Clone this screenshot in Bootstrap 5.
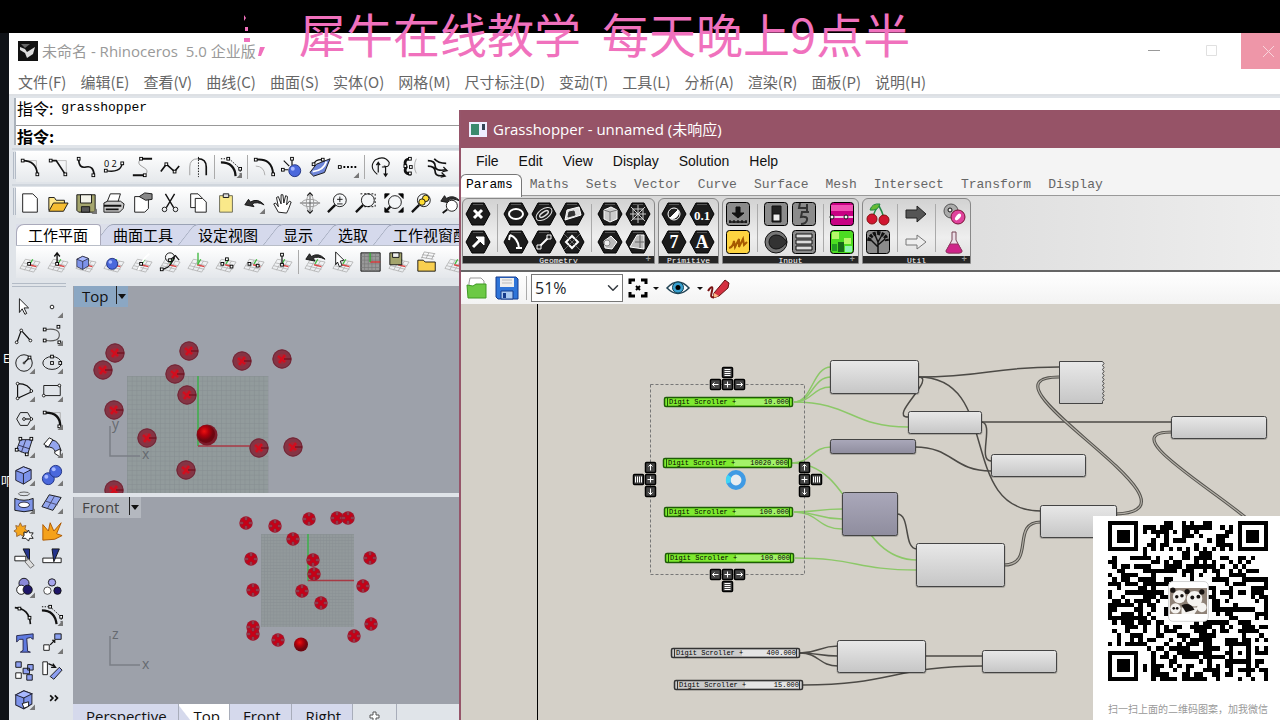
<!DOCTYPE html>
<html lang="zh-CN">
<head>
<meta charset="utf-8">
<meta name="viewport" content="width=device-width, initial-scale=1">
<title>Rhinoceros - Grasshopper</title>
<link href="https://cdn.jsdelivr.net/npm/bootstrap@5.3.0/dist/css/bootstrap.min.css" rel="stylesheet">
<style>
:root{--ui:"Open Sans","Noto Sans CJK SC",sans-serif;--mono:"Liberation Mono","Noto Sans CJK SC",monospace}
body{background:#000;font-family:var(--ui);font-size:15px;line-height:20px;color:#000;height:100vh}
button{border:0;background:none;padding:0;color:inherit}
svg{display:block}
.desk-strip{width:9px;background:#0f1217;margin-top:33px;color:#fff;font-size:12px}
.rhino{margin-top:33px;background:#e0e4e9;min-width:0}
.rh-title{height:36px;background:#fff;color:#999;padding-left:9px;margin-right:-19px}
.rh-title button{width:58px;height:36px}
.rh-title .close-btn{background:#ee96a8;color:#fff}
.rh-menu{height:27px;background:#fff;padding-left:9px;gap:14px;border-bottom:2px solid #dde0e4}
.rh-menu a{color:#666;text-decoration:none;font-family:"Noto Sans CJK SC",sans-serif;white-space:nowrap}
.cmd{margin:2px 0 3px 5px;border-left:2px double #aab2bb;background:#fff;font-family:var(--mono);font-size:13px}
.cmd>*{height:24px;padding-left:1px}
.cmd .cjk{font-size:16px;font-family:"Noto Sans CJK SC",sans-serif}
.cmd>:first-child{border-bottom:1px solid #999;height:28px;align-items:start!important}
.cmd>:last-child{height:19px}
.cmd input{border:0;outline:0;flex:1;min-width:0;height:16px}
.tbar{height:36px;margin-left:3px;padding:1px 0 4px 1px;border-top:2px solid #d0d6dd;}
.tbar>div{background:linear-gradient(#fff,#e6e9ec);border-left:0;height:31px;flex:1}
.tbar::before{content:"";width:3px;border:1px solid #b3bbc6;border-width:0 1px;margin:1px 0}
.tool{width:28px;height:24px;display:grid;place-items:center}
.tool svg{width:24px;height:24px;overflow:visible}
.tbar .tool svg,.planes .tool svg,.pal-grid .tool svg{width:22px;height:22px}
.sep{width:1px;height:24px;background:#aaa;margin:0 2px}
.rtabs{height:22px;margin-left:7px;background:#dcdfea;border-bottom:1px solid #b9bec8;overflow:hidden}
.rtabs button{padding:0 13px 0 12px;position:relative;font-family:"Noto Sans CJK SC",sans-serif;line-height:18px;white-space:nowrap;z-index:0}
.rtabs button::before{content:"";position:absolute;inset:0 -5px 0 0;background:#d5d9ec;border:1px solid #9aa2b4;border-width:1px 1px 0;transform:skewX(-38deg);border-radius:5px 5px 0 0;z-index:-1}
.rtabs button.active{z-index:2}
.rtabs button.active::before{background:#fff;transform:none;inset:0;border-color:#aab;border-radius:8px 4px 0 0}
.planes{height:32px;margin-left:7px;background:linear-gradient(#fff,#e4e7eb)}
.palette{width:64px;padding:5px 0 0 3px}
.palette .pal-grip{height:4px;width:54px;border:1px solid #b3bbc6;border-width:1px 0;margin-bottom:6px}
.palette .tool{height:28px;place-items:center}
.pal-grid{display:grid;grid-template-columns:28px 28px;margin-left:-2px}
.vp{background:#9da1aa;position:relative;overflow:hidden;flex:1 1 0;min-height:0}
.vp>svg{width:100%;height:100%;position:absolute;inset:0}
.vlabel{position:relative;background:#b4b8bf;color:#444;font-size:15px;height:21px;width:67px;line-height:20px;padding-left:8px;margin-left:1px}
.vlabel.on{background:#8ba7c3;color:#111;width:54px}
.vlabel i{border-left:1px solid #222;height:18px;padding:8px 0 0 1px;margin-left:auto;width:12px}
.caret{display:block;border:4px solid transparent;border-top:5px solid #111;border-bottom:0;width:0;height:0}
.gh-bar .caret{border-width:3px 3px 0;border-top-width:3px}
.vtabs{height:16px;background:#e0e4e9;overflow:hidden}
.vtabs button{height:22px;line-height:24px;padding:0 11px 0 13px;background:#d5d9ec;border-right:1px solid #a8adba;font-size:15px;color:#111}
.vtabs .active{background:linear-gradient(52deg,#d5d9ec 12px,#fff 13px);padding:0 9px 0 15px}
.gh{position:absolute;left:459px;right:0;top:110px;bottom:0;border-left:2px solid #96556a;background:#f4f4f4;overflow:hidden}
.gh-title{height:38px;background:#965367;color:#fff;padding-left:8px;gap:6px}
.gh-menu{height:26px;padding-left:15px;gap:20px;font-family:"Liberation Sans",sans-serif;font-size:14px}
.gh-menu a{color:#111;text-decoration:none}
.gh-tabs{height:22px;font-family:var(--mono);font-size:13px;padding-left:5px;gap:17px;color:#666;border-bottom:1px solid #999}
.gh-tabs button{position:relative;line-height:20px}
.gh-tabs button.active{color:#000;line-height:18px;z-index:0}
.gh-tabs button.active::before{content:"";position:absolute;inset:0 -9px -2px -6px;border:1px solid #777;border-bottom:0;border-radius:6px 6px 0 0;background:#fff;z-index:-1}
.ribbon{height:76px;padding:2px 1px 6px;gap:3px;background:linear-gradient(90deg,#d9d9d9 400px,#eee);border-bottom:2px solid #666}
.panel{border:1px solid #888;border-radius:6px 6px 0 0;background:linear-gradient(#d2d2d2,#eee 60%,#ddd);overflow:hidden}
.panel .icons{padding:1px 2px 0 1px;height:57px}
.panel .two{display:grid;grid-template-rows:28px 28px;grid-auto-flow:column}
.panel .two .tool{height:28px}
.panel .div{width:1px;margin:4px 4px 4px 5px;background:#aaa}
.panel footer{background:#262626;color:#fff;height:9px;font:8px/9px var(--mono);text-align:center;position:relative}
.panel footer b{position:absolute;right:3px;font-size:9px;color:#999}
.gh-bar{height:32px;background:linear-gradient(#fff,#f3f3f3);padding-left:1px}
.gh-bar .tool{width:30px}
.gh-bar select{width:92px;height:28px;border:1px solid #777;border-radius:0;font-size:16px;padding:0 24px 0 3px;background-color:#fff;background-position:right 3px center;background-size:12px;font-family:var(--ui);line-height:24px}
.canvas{background:#d4d0c8;flex:1;min-height:0;overflow:hidden}
.canvas svg{width:100%;height:100%}
.canvas text{font-family:"Liberation Mono",monospace;font-size:7px}
.marquee-text{position:absolute;left:244px;top:0;width:668px;height:66px;overflow:hidden;color:#f071bd;font:400 47px/66px "Noto Sans CJK SC",sans-serif;white-space:pre;gap:33px;pointer-events:none}
.qr{position:absolute;right:0;bottom:0;width:187px;height:204px;background:#fff;padding:5px 12px 0 15px;color:#999;font:10px/18px "Noto Sans CJK SC",sans-serif;white-space:nowrap}
.qr div{margin-top:19px}
</style>
</head>
<body class="position-relative overflow-hidden d-flex">
<aside class="desk-strip flex-shrink-0 overflow-hidden"><svg width="9" height="687"><text x="3" y="330" fill="#fff" font-size="12">E</text><text x="1" y="453" fill="#fff" font-size="12">叩</text></svg></aside>

<main class="rhino flex-grow-1 d-flex flex-column overflow-hidden">
  <header class="rh-title d-flex align-items-center flex-shrink-0">
    <svg class="me-1" width="20" height="20"><path fill="#111" d="M0 0h20v20H0z"/><path d="M2 6l5 2 2 3 8-5-2 7-6 4-2-5-5-3z" fill="#ddd"/><path d="M3 3h9l-5 4z" fill="#666"/></svg>
    <span>未命名 - Rhinoceros&nbsp; 5.0 企业版</span>
    <button class="ms-auto" aria-label="最小化"><svg width="58" height="36"><path d="M23 17.500h12" stroke="#999"/></svg></button>
    <button aria-label="最大化"><svg width="58" height="36"><path d="M23.500 12.500h10v10h-10z" fill="none" stroke="#e0e0e0"/></svg></button>
    <button class="close-btn" aria-label="关闭"><svg width="58" height="36"><path d="M22 13l11 11M33 13L22 24" stroke="#f8d5dc"/></svg></button>
  </header>
  <nav class="rh-menu d-flex align-items-center flex-shrink-0">
    <a href="#">文件(F)</a><a href="#">编辑(E)</a><a href="#">查看(V)</a><a href="#">曲线(C)</a><a href="#">曲面(S)</a><a href="#">实体(O)</a><a href="#">网格(M)</a><a href="#">尺寸标注(D)</a><a href="#">变动(T)</a><a href="#">工具(L)</a><a href="#">分析(A)</a><a href="#">渲染(R)</a><a href="#">面板(P)</a><a href="#">说明(H)</a>
  </nav>
  <section class="cmd flex-shrink-0">
    <div class="d-flex"><span class="cjk">指令:</span><span>&nbsp;grasshopper</span></div>
    <div class="d-flex align-items-center"><label for="cmdline" class="cjk fw-bold">指令:</label><input id="cmdline"></div>
  </section>
  <div class="tbar d-flex flex-shrink-0"><div class="d-flex align-items-center" data-icons="curves"></div></div>
  <div class="tbar d-flex flex-shrink-0"><div class="d-flex align-items-center" data-icons="files"></div></div>
  <div class="flex-shrink-0 pt-1 pb-0"></div>
  <nav class="rtabs d-flex flex-shrink-0"><button class="active">工作平面</button><button>曲面工具</button><button>设定视图</button><button>显示</button><button>选取</button><button>工作视窗配置</button></nav>
  <div class="planes d-flex align-items-center flex-shrink-0" data-icons="planes"></div>
  <div class="d-flex flex-grow-1 overflow-hidden">
    <aside class="palette flex-shrink-0"><div class="pal-grip"></div><div class="pal-grid" data-icons="palette"></div></aside>
    <section class="d-flex flex-column flex-grow-1 pt-2 overflow-hidden">
      <div class="vp mb-1">
        <svg><defs>
          <pattern id="g1" x="127" y="377" width="4.7" height="4.7" patternUnits="userSpaceOnUse"><path d="M0 4.7V0h4.7" fill="none" stroke="#7f868b"/></pattern>
          <pattern id="g2" x="261" y="535" width="3.1" height="3.1" patternUnits="userSpaceOnUse"><path d="M0 3.1V0h3.1" fill="none" stroke="#858b90"/></pattern>
          <g id="ball"><circle r="9.7" fill="#853444"/><circle r="9" fill="none" stroke="#702838"/><circle r="5" fill="#a02a3a"/><path d="M-4-3l7 6M3-4l-6 8" stroke="#d40c1c" stroke-width="2.200"/><path d="M2 0h7" stroke="#6b0715"/></g>
          <g id="sball"><circle r="6.7" fill="#a3142a"/><path d="M-4-4l8 8M4-4l-8 8" stroke="#c80016" stroke-width="2.200"/><path d="M-6 0h3M3 0h3M0-6v3M0 3v3" stroke="#8c4a58" stroke-width="1.500"/></g>
          <radialGradient id="rg" cx=".4" cy=".35"><stop stop-color="#e11"/><stop offset=".5" stop-color="#b0000c"/><stop offset="1" stop-color="#6d0610"/></radialGradient>
        </defs>
        <g transform="translate(-73 -287)"><path d="M127 377h141v141H127z" fill="#929b9c"/><path d="M127 377h141.500v141.500H127z" fill="url(#g1)" opacity=".7"/><path d="M198 377v70" stroke="#3db04a" stroke-width="1.500"/><path d="M198 447h70" stroke="#a83944" stroke-width="1.500"/><path d="M110 427v30h30" fill="none" stroke="#7b7f86" stroke-width="1.500"/><g fill="#666a70" font-size="14"><text x="112" y="430">y</text><text x="142" y="460">x</text></g><g id="topballs"></g></g></svg>
        <div class="vlabel on d-flex"><span>Top</span><i><b class="caret"></b></i></div>
      </div>
      <div class="vp">
        <svg><g transform="translate(-73 -498)"><path d="M261 535h93v93h-93z" fill="#92999b"/><path d="M261 535h93v93h-93z" fill="url(#g2)" opacity=".7"/><path d="M308 535v47" stroke="#3db04a" stroke-width="1.500"/><path d="M308 581.500h46" stroke="#a83944" stroke-width="1.500"/><path d="M110 637v29h30" fill="none" stroke="#7b7f86" stroke-width="1.500"/><g fill="#666a70" font-size="14"><text x="112" y="640">z</text><text x="142" y="670">x</text></g><g id="frontballs"></g></g></svg>
        <div class="vlabel d-flex"><span>Front</span><i><b class="caret"></b></i></div>
      </div>
      <nav class="vtabs d-flex flex-shrink-0"><button>Perspective</button><button class="active">Top</button><button>Front</button><button>Right</button><button class="px-3 bg-transparent" aria-label="新增"><svg width="11" height="18"><path d="M4 6h3v3h3v3H7v3H4v-3H1V9h3z" fill="#fff" stroke="#555"/></svg></button></nav>
    </section>
  </div>
</main>

<section class="gh d-flex flex-column">
  <header class="gh-title d-flex align-items-center flex-shrink-0"><svg width="18" height="15"><path fill="#eef" d="M0 0h18v15H0z"/><path fill="#3b8a6d" d="M2 2h8v11H2z"/><path fill="#345" d="M13 2h3v6h-3z"/></svg><span>Grasshopper - unnamed (未响应)</span></header>
  <nav class="gh-menu d-flex align-items-center flex-shrink-0"><a href="#">File</a><a href="#">Edit</a><a href="#">View</a><a href="#">Display</a><a href="#">Solution</a><a href="#">Help</a></nav>
  <nav class="gh-tabs d-flex flex-shrink-0"><button class="active">Params</button><button>Maths</button><button>Sets</button><button>Vector</button><button>Curve</button><button>Surface</button><button>Mesh</button><button>Intersect</button><button>Transform</button><button>Display</button></nav>
  <div class="ribbon d-flex flex-shrink-0" id="ribbon"></div>
  <div class="gh-bar d-flex align-items-center flex-shrink-0">
    <button class="tool" aria-label="打开"><svg viewBox="0 0 24 24"><path d="M5 2h11l3 3v14H4V7z" fill="#fff" stroke="#999"/><path d="M2 9l6 1 3-2h10v14H3z" fill="#6cc944" stroke="#3e9a22"/></svg></button>
    <button class="tool" aria-label="保存"><svg viewBox="0 0 24 24"><path d="M1 1h20l2 2v20H3l-2-2z" fill="#2e74d8" stroke="#153a8c"/><path d="M5 2h14v9H5z" fill="#eee"/><path d="M7 4h10M7 7h10" stroke="#bbb"/><path d="M6 15h12v8H6z" fill="#aac8f0" stroke="#153a8c"/><path d="M8 17h3v5H8z" fill="#153a8c"/></svg></button>
    <span class="sep mx-1"></span>
    <select class="form-select" aria-label="缩放"><option>51%</option></select>
    <button class="tool" aria-label="缩放至全部"><svg viewBox="0 0 24 24"><path d="M4 8V4h5M15 4h5v4M20 16v4h-5M9 20H4v-4" fill="none" stroke="#000" stroke-width="3"/><path d="M10 10l4 4M14 10l-4 4" stroke="#000" stroke-width="2"/></svg></button><b class="caret"></b>
    <button class="tool ms-1" aria-label="预览"><svg viewBox="0 0 24 24"><path d="M1 12Q12 0 23 12Q12 23 1 12z" fill="#f7fbff" stroke="#245" stroke-width="1.500"/><circle cx="12" cy="11.500" r="5.500" fill="#38a0d0" stroke="#145"/><circle cx="12" cy="11.500" r="2.500"/></svg></button><b class="caret ms-1"></b>
    <button class="tool" aria-label="草图"><svg viewBox="0 0 24 24"><path d="M8 17L19 4l4 3-1 5-9 8-6 2z" fill="#d43040" stroke="#611"/><path d="M8 17l5 3-6 2z" fill="#fb8"/><path d="M2 15c4-6 5-4 4 0s-2 7 2 6" fill="none" stroke="#711" stroke-width="2"/></svg></button>
  </div>
  <div class="canvas"><svg><defs>
    <linearGradient id="lg" x2="0" y2="1"><stop stop-color="#e8e8e8"/><stop offset="1" stop-color="#c6c6c6"/></linearGradient>
    <linearGradient id="pg" x2="0" y2="1"><stop stop-color="#aaa8ba"/><stop offset="1" stop-color="#8f8d9e"/></linearGradient>
    </defs><g transform="translate(-461 -304)" id="board"></g></svg></div>
</section>

<div class="marquee-text d-flex"><svg width="22" height="68" fill="#f071bd"><path d="M0 15l2 3-2 3zM1 27h3v4H1zM0 38h6v4H0zM16 47h5l-4 9h-3z"/></svg><span>犀牛在线教学  每天晚上9点半</span></div>
<figure class="qr m-0"><svg id="qr" width="160" height="160" viewBox="0 0 37 37" shape-rendering="crispEdges"></svg><div>扫一扫上面的二维码图案，加我微信</div></figure>

<script>
// small drawing helpers, all in a 24 x 24 box
const q=(x,y)=>`<rect x="${x-1.5}" y="${y-1.5}" width="3" height="3" fill="#fff" stroke="#000"/>`;
const ln=(d,w=1.3,c='#111')=>`<path d="${d}" fill="none" stroke="${c}" stroke-width="${w}"/>`;
const f=(d,c,s='#111')=>`<path d="${d}" fill="${c}" stroke="${s}"/>`;
const ci=(x,y,r,c='none',s='#111')=>`<circle cx="${x}" cy="${y}" r="${r}" fill="${c}" stroke="${s}"/>`;
const corner='<path d="M24 18v6h-6z" fill="#777"/>';
const ball=(x,y,r)=>ci(x,y,r,'#4a68dc','#1e2f80')+`<circle cx="${x-r/3}" cy="${y-r/3}" r="${r/3}" fill="#a8b8ff"/>`;
const cube=(x,y,s=1)=>`<g transform="translate(${x} ${y}) scale(${s})">`+f('M0 5l8-4 8 3v10l-8 5-8-4z','#7d93ea','#223')+f('M0 5l8 3 8-4-8-3z','#a8b8ff','#223')+ln('M8 8v11',1,'#223')+'</g>';
const plane=ln('M7 9l16 3M5 13l16 3M3 16l16 4M1 19l15 4M7 9l-6 10M12 10l-6 11M18 11l-7 11M23 12l-7 11',.8,'#aaa')+ln('M11 15l8 2',1.5,'#d44')+ln('M12 14l3-5',1.5,'#4b4');
const undo=(y=0)=>`<g transform="translate(0 ${y})">`+f('M2 14l4-6 2 3q8-5 15 3-8-4-13-1l2 3z','#333')+'</g>';
const glass=(t='')=>ln('M9 14l-8 8',2.5)+ci(14,9,7,'#f4f6f8')+t;
const icons={
curves:[
 ln('M4 5h15v13',.8,'#aaa')+ln('M4 5q15 0 16 15',1.8)+q(4,5)+q(20,20), ln('M4 5h17v14',.8,'#aaa')+ln('M4 5h6l10 15',1.8)+q(4,5)+q(20,20),
 ln('M4 3q0 11 8 9t9 9',1.8)+q(4,3)+q(20,21), ln('M3 16q16 3 18-8',1.5)+q(3,16)+q(21,8)+'<text x="1" y="12" font-size="10">0 2</text>',
 ln('M11 3h12M2 21h14',2)+ln('M11 3q-6 5 2 9t2 9',1,'#999')+q(11,3)+q(15,21), ln('M2 17l6-8 9 8 5-6',1.8)+q(8,9)+q(17,17),
 ln('M3 21V12Q3 3 12 3',1,'#999')+ln('M12 3q9 0 9 9v9',1.8)+'<path d="M12.500 1v22" stroke="#000" stroke-dasharray="1.500"/>',0, ln('M1 7q15 0 16 15',2.4)+'<path d="M1 3h9l12 11v8" fill="none" stroke="#000" stroke-dasharray="1.500"/>'+q(9,3)+q(22,14)+corner,0,
 ln('M3 4q18-2 19 16',2.2)+ln('M3 11q9 0 10 10',1,'#aaa')+q(3,4)+q(22,20), ball(15,16,6.5)+ln('M12 10V3M8 15H2M9 11L3 5',1.3)+q(12,3)+q(2,15),
 f('M1 18l7-9 15-6-6 15-12 4z','#6f86d8')+ln('M4 17q12-1 15-11',2,'#fff')+ln('M5 9q2-6 11-5')+q(5,9)+q(15,4), '<path d="M3 12h19" stroke="#000" stroke-width="2" stroke-dasharray="2"/>'+q(3,12)+corner,0,
 ln('M8 20Q-2 12 6 4q10-5 15 3 0 6-6 4',1.2)+ln('M9 18V8M7 10l2-3 2 3M13 12h4v9M15 19l2 3 2-3'), ln('M13 3q-8 1-4 9-4 7 5 8',3)+ln('M20 3q-4 8 0 16',1,'#aaa')+q(13,3)+q(8,11)+q(14,12)+q(13,19), ln('M2 5q8 0 8 6t12 4M2 11q8 0 8 6t10 4M9 3q4 5 13 5',1.8)+ln('M19 12l4 4-5 1M17 18l4 4-5 1')],
files:[
 f('M4 2h11l5 5v15H4z','#fff'), f('M2 20V6h6l2 3h9v4','#ffe78a')+f('M2 21l5-9h16l-5 9z','#f6bd32'), f('M2 3h20v19H4l-2-2z','#a4a56d')+f('M6 3h12v9H6z','#f2f2e8')+f('M7 16h9v6H7z','#555')+corner,
 f('M8 2h11l-3 10H4z','#fff')+f('M1 12l4-2h14l4 3-1 5-4 4H1z','#ccc')+ln('M1 15h19M3 19h14',2), f('M4 5h15v13l-4 4H4z','#fff')+f('M9 5l6-4 8 1v6l-7 1z','#888'),
 ln('M7 2l9 15M17 2L8 17',1.5)+ci(6,19,2.5)+ci(18,19,2.5), f('M4 2h8l4 4v11H4z','#fff')+f('M9 7h8l4 4v11H9z','#fff'), f('M5 4h14v18H5z','#fae98a','#665')+f('M9 2h6v4H9z','#ddd'),
 undo()+corner, f('M8 22L3 13l2-1 3 4-2-10 2-1 3 8V3h2l1 9 2-8 2 1-1 9 3-4 2 1-3 8-2 4z','#fff'), ln('M12 1v22M1 12h22',1,'#555')+ln('M9 4l3-3 3 3M9 20l3 3 3-3')+'<ellipse cx="12" cy="12" rx="9" ry="4" fill="none" stroke="#999"/><ellipse cx="12" cy="12" rx="4" ry="9" fill="none" stroke="#999"/>',
 glass(ln('M11 8h6M14 5v6M11 13h6',1)), glass()+'<path d="M6 2h16v14H10" fill="none" stroke="#000" stroke-dasharray="2"/>', f('M2 2h5l-5 5zM17 2h5v5zM22 17v5h-5zM2 17v5h5z','#000')+ci(13,11,7,'#f4f6f8')+ln('M8 16l-4 4',2.5), glass(ci(16,7,3.5,'#fd3')+ci(12,11,3.5,'#fd3')), undo(-4)+ci(14,15,6,'#fff')+ln('M9 19l-5 4',2)],
planes:[
 plane+q(11,14), plane+ln('M11 14V3M8 6l3-4 3 4',1.5)+q(11,14), plane+cube(2,5,.8), plane+ball(10,14,6), plane+ln('M8 21Q12 9 20 3',2,'#fff')+q(11,14), plane+ln('M4 20q10-2 13-15M13 9l5-4 4 5',1.3)+ci(12,7,5)+q(3,20)+q(12,10), plane+ln('M12 15V2',1.5,'#4b4'), plane+q(8,14)+q(13,9)+q(18,17), plane+q(7,14)+q(16,16), plane+ln('M12 15V4')+q(12,4)+q(12,15),0,
 plane+undo(-5), plane+f('M4 1l9 9-4 1 2 5-3 1-2-5-2 3z','#fff'), f('M1 2h21v20H1z','#999')+ln('M5 2v20M9 2v20M13 2v20M17 2v20M1 6h21M1 10h21M1 14h21M1 18h21',.7,'#777')+ln('M11 12h11',1.5,'#d33')+ln('M11 12V2',1.5,'#3a3'), plane+f('M2 2h13v13H2z','#a4a56d')+f('M5 2h7v5H5z','#eee'), ln('M9 1l12 2M7 4l13 2M6 7l13 2M9 1L6 8M14 2l-3 6M20 3l-3 6',.8,'#999')+f('M2 22V10h6l2 2h11v10z','#f8cf50'), plane],
palette:[
 f('M7 3v15l3-4 3 6 2-1-3-6h5z','#fff'), ci(12,12,2,'#fff')+corner,
 ln('M4 21l5-14 10 11')+ci(4,20,1.5,'#fff')+ci(9,7,1.5,'#fff')+ci(19,18,1.5,'#fff'), ln('M5 6q15-2 15 6t-15 6',1.2,'#555')+q(4,6)+q(4,18)+q(19,3)+q(20,20)+corner,
 ci(12,12,9)+ln('M12 12l6-6')+ci(12,12,1,'#fff')+q(18,6)+corner, '<ellipse cx="12" cy="12" rx="10" ry="7" fill="none" stroke="#111"/>'+q(12,5)+q(12,12)+q(21,12)+corner,
 ln('M5 4q13 0 15 9L5 20z')+ci(5,4,1.5,'#fff')+ci(5,20,1.5,'#fff')+ci(20,12,1.5,'#fff')+corner, f('M3 6h18v11H3z','none')+ci(3,17,1.5,'#fff')+ci(20,6,1.5,'#fff')+corner,
 f('M4 12l4-7h8l4 7-4 7H8z','none')+ln('M12 12h6')+ci(12,12,1.5,'#fff')+ci(20,12,1.5,'#fff')+corner, ln('M4 5h17v14',.8,'#999')+ln('M5 5q16 0 16 15',2.5)+q(4,5)+q(20,20)+corner,
 f('M8 4h13l-5 16-12-5z','#97a8ee')+ln('M6 10l12 4M14 4l-5 14',1,'#335')+q(8,3)+q(20,3)+q(4,15)+q(15,20)+corner, f('M6 6q12-6 16 10l-6 2q-2-7-11-6z','#94a5ee')+f('M9 2L3 9l5 3 5-8z','#fff')+f('M15 17l6-3v9l-6-4z','#fff')+corner,
 cube(3,2,1.05)+corner, ball(8,16,6.5)+ball(16,8,6.5)+corner,
 f('M2 7q10 4 20 0v13q-10 3-20 0z','#7f95e8')+'<ellipse cx="12" cy="14" rx="6" ry="3" fill="#fff" stroke="#223"/><ellipse cx="12" cy="2" rx="6" ry="2" fill="none" stroke="#555"/>'+corner, f('M9 3l13 3-9 14-12-4z','#92a5ee')+ln('M5 10l13 4M15 4L7 18',1,'#446')+corner,
 f('M3 6l3 1 2-4 2 4 4-1-1 4 3 2-4 2 0 4-4-2-4 2 0-4-3-2 3-2z','#f5a61d','#963')+f('M12 13l3 1 2-3 1 3 4 0-2 3 2 3-4 0-1 3-3-3-4 0 2-3z','#fff'), f('M2 22V5l6 7 2-9 4 9 8-9-5 12 6 2-8 4z','#f5a11b','#a50'),
 f('M2 9h12v5H2z','#fff')+f('M11 1h7v14z','#24348c')+f('M13 15l4-3 6 7-4 3z','#ddd','#666'), f('M2 11h20v5H2z','#fff')+f('M12 1h8l-6 14z','#24348c'),
 ci(12,8,5.5,'#8b88d8')+ci(9,15,5,'#fff')+ci(16,15,5,'#1e1668')+corner, ci(12,7,4,'#a7a5ee')+ci(7,16,4,'#fff','#444')+ci(18,16,4,'#1e1668'),
 ln('M2 4q16 1 17 18',1.8)+q(7,5)+q(18,15), ln('M1 7q14 0 16 15',2.4)+'<path d="M1 3h9l12 11v8" fill="none" stroke="#000" stroke-dasharray="1.500"/>'+q(10,3)+q(22,14)+corner,
 f('M4 4l18-2v6l-3-2-4 1 1 14 3 1H8l3-2V8L7 8l-3 3z','#5f7ae0','#224'), f('M3 14h6v6H3z','#fff')+f('M15 2h7v6h-7z','#8aa0f0')+ln('M10 14l5-5M12 9h3v3')+corner,
 f('M3 2h6v6H3zM16 5h6v6h-6zM11 9h7v6h-7zM15 16h6v6h-6z','#8d9ff0')+f('M3 14h6v6H3z','#fff'), f('M2 2h5v14H2z','#fff')+f('M10 18L20 8l3 3-9 10z','#8d9ff0')+ln('M8 4l7 3M13 4l3 4-5 0'),
 cube(3,2,1.1)+f('M10 17l7-2v5l-5 2z','#fff')+corner, ln('M10 8l3 3-3 3M15 8l3 3-3 3',1.8)]
};
const btn=(s,label)=>`<button class="tool" aria-label="${label}"><svg viewBox="0 0 24 24">${s}</svg></button>`;
document.querySelectorAll('[data-icons]').forEach(el=>{el.innerHTML=icons[el.dataset.icons].map((s,i)=>s?btn(s,el.dataset.icons+' '+(i+1)):'<span class="sep"></span>').join('')});

// ribbon panels
const hex=s=>f('M6 1h12l6 11-6 11H6L0 12z','#1c1c1c','#000')+ln('M7 2.5h10',1,'#555')+s;
const box=(s,c='#8b8b8b')=>`<rect x=".5" y=".5" width="23" height="23" rx="3" fill="${c}" stroke="#000"/>`+s;
const w='#fff', tx=(t,s)=>`<text x="12" y="18" font-size="${s}" font-family="Liberation Serif" font-weight="bold" text-anchor="middle" fill="#fff">${t}</text>`;
const panels=[
['Geometry',1,[[hex(ln('M8 8l8 8M16 8l-8 8',3,w)),hex(ln('M7 17l8-8',3,w)+f('M10 7h8v8z',w,w))],
 [hex('<ellipse cx="12" cy="12" rx="7" ry="5" fill="none" stroke="#fff" stroke-width="2"/>'),hex(ln('M6 5q8 3 9 13M12 18h6M6 5l-1 5',2,w)),hex('<g transform="rotate(-35 12 12)"><ellipse cx="12" cy="12" rx="9" ry="5" fill="none" stroke="#ddd"/><ellipse cx="12" cy="12" rx="5" ry="2" fill="none" stroke="#ddd" stroke-width="1.500"/></g>'),hex(ln('M7 17L17 7',2,w)+f('M5 15h4v4H5zM15 5h4v4h-4z','#222',w)),hex(f('M7 8l12-3 2 8-16 5z','#ddd',w)+f('M9 10l5-1 1 4-7 2z','#333','#333')),hex(ln('M12 6l6 6-6 6-6-6z',2,w)+ln('M4 4l16 16M20 4L4 20',.7,'#888'))],
 [hex(f('M6 8l7-3 6 3v9l-7 3-6-3z','#ccc',w)+ln('M6 8l6 2 7-2M12 10v9',1,'#777')),hex(f('M6 11l7-5 6 6-5 7-7-1z','#bbb',w)+ci(9,13,3,'#eee','#888')),hex(ln('M7 7h10v10H7zM7 12h10M12 7v10M12 3v4M12 17v4M4 12h3M17 12h3M5 5l14 14M19 5L5 19',1,'#ccc')),hex(f('M4 17l4-7 3-5h7v14z','#bbb',w)+ln('M9 12h9M14 5v13',1,'#666'))]]],
['Primitive',0,[[hex(ci(12,12,6,'#222',w)+f('M16 8a6 6 0 0 1-8 8z',w,w)),hex(tx('7',18)),hex(tx('0.1',13)),hex(tx('A',18))]]],
['Input',1,[[box(f('M10 5h4v6h4l-6 5-6-5h4z','#111')+ln('M3 20h18M4 21v-3M8 21v-3M12 21v-3M16 21v-3M20 21v-3')),box(ln('M3 18q4-1 5-7l1 6 4-8v8l4-8 1 6 3-3',2,'#a65a00'),'#fdd440')],
 [box(f('M8 4h9v16H8z','#222')+f('M9 12h7v7H9z','#eee')),ci(12,12,11,'#777')+f('M12 5q6 0 11 7-5 7-11 7a7 7 0 0 1 0-14z','#333'),box(ln('M8 1l-1 5h8M15 2v7M17 10h-7l-1 5q7-1 6 3t-6 4',2,'#333')),box(f('M4 4h16v4H4zM4 10h16v4H4zM4 16h16v4H4z','#ddd'))],
 [box('<path d="M1 3h22v6H1z" fill="#f050b4"/>'+ln('M1 15h22',1.5,w)+ci(2,15,2,w)+ci(16,15,2,w),'#c80083'),box('<path d="M2 2h7v7H2zM14 8h7v6h-7z" fill="#b6f76a"/><path d="M8 12h6v10H8z" fill="#176b19"/><path d="M2 14h5v7H2z" fill="#239c24"/><path d="M15 16h7v6h-7z" fill="#8ef5b0"/>','#4cdc22')]]],
['Util',1,[[ln('M7 15q2-8 6-11 3 5 5 12',1.5,'#284')+f('M4 8q2-7 10-6-2 7-10 6z','#6b3','#284')+ci(6,17,5,'#d11630','#811')+ci(18,18,5,'#d11630','#811'),box(ln('M12 23V10M12 17L5 10M12 15l7-6M12 12L9 5M12 12l4-7',1.5)+'<path d="M3 11q1-7 9-8 8 1 9 8" fill="none" stroke="#111" stroke-width="4" stroke-dasharray="3 1"/>')],
 [f('M2 8h11V4l9 8-9 8v-4H2z','#555','#222'),f('M2 9h11V5l9 7-9 7v-4H2z','#eee','#777')],
 [ci(9,9,7,'#aaa','#555')+ci(8,8,2,'#eee')+ci(16,15,7,'#e0429d','#713')+'<ellipse cx="16" cy="15" rx="2" ry="4" fill="#fff" transform="rotate(40 16 15)"/>',f('M10 2h4v8l6 11q0 2-3 2H7q-3 0-3-2l6-11z','#ecdfe8','#745')+f('M8 14h8l4 7q0 2-3 2H7q-3 0-3-2z','#cf2389','#936')]]]];
document.getElementById('ribbon').innerHTML=panels.map(([n,more,gs])=>`<div class="panel"><div class="icons d-flex">${gs.map(g=>`<div class="two">${g.map((s,i)=>btn(s,n+' '+(i+1))).join('')}</div>`).join('<span class="div"></span>')}</div><footer>${n}${more?'<b>+</b>':''}</footer></div>`).join('');

// spheres in the two viewports
const put=(id,sym,a)=>document.getElementById(id).innerHTML=a.map(([x,y])=>`<use href="#${sym}" x="${x}" y="${y}"/>`).join('');
put('topballs','ball',[[115,354],[103,371],[114,411],[147,439],[114,491],[189,352],[242,362],[282,360],[175,375],[187,396],[259,449],[293,448],[186,471]]);
topballs.innerHTML+='<circle cx="207" cy="436" r="10.500" fill="#7c1c2a"/><circle cx="206" cy="435" r="9" fill="url(#rg)"/>';
put('frontballs','sball',[[246,524],[275,527],[309,520],[337,519],[348,519],[293,540],[313,561],[314,575],[302,592],[321,604],[251,560],[253,591],[253,628],[253,635],[278,641],[354,637],[371,625],[363,587],[370,559]]);
frontballs.innerHTML+='<circle cx="301" cy="645.500" r="7" fill="url(#rg)"/>';

// node graph
let b=ln('M537.5 304V2000',1,'#000');
const wire=(x1,y1,x2,y2,c,k)=>{k=k||Math.max(12,(x2-x1)/2);return `M${x1} ${y1}C${x1+k} ${y1} ${x2-k} ${y2} ${x2} ${y2}`};
const G=(...a)=>b+=ln(wire(...a),1.5,'#8cc868'), D=(x1,y1,x2,y2,k)=>b+=ln(wire(x1,y1,x2,y2,0,k),1.5,'#4c4a46');
const DD=d=>b+=ln(d,3.2,'#55534e')+ln(d,1.2,'#b4b0a8');
G(794,402,831,367);G(794,402,831,377);G(794,402,831,387);G(794,402,908,427);G(792,463,831,447);G(792,463,917,560);
G(794,512,842,509);G(794,512,842,519);G(794,512,842,529);G(795,558,917,570);
D(918,377,1059,367);D(918,377,908,417,20);D(918,377,1041,511,85);D(981,422,1172,422);D(981,422,991,461,14);D(915,447,991,471);D(897,514,917,549,14);
DD('M1004 565C1036 565 1010 522 1041 522');DD('M1116 514C1220 510 965 377 1059 377');DD('M1260 530C1225 495 1110 432 1172 432');
D(925,656,983,656);D(800,653,838,646);D(800,653,838,656);D(800,653,838,666);D(803,685,983,666);
const node=(x,y,X,Y,p)=>b+=`<rect x="${x-.5}" y="${y+1}" width="${X-x+2}" height="${Y-y+1}" rx="3" fill="#0003"/><rect x="${x}.5" y="${y}.5" width="${X-x}" height="${Y-y}" rx="2" fill="url(#${p||'lg'})" stroke="#444"/>`;
node(830,360,918,393);node(908,411,981,433);node(830,439,915,453,'pg');node(1171,416,1266,438);node(991,454,1085,476);node(842,492,897,535,'pg');node(1040,505,1116,537);node(916,543,1004,586);node(837,640,925,672);node(982,650,1056,672);
b+=f('M1059.5 361.5h43'+'l1.5 2-1.5 2'.repeat(10)+'v2h-43z','url(#lg)','#444');
b+='<rect x="650.500" y="384.500" width="154" height="190" fill="none" stroke="#777" stroke-dasharray="3 2"/>';
const scroll=(x,y,v,c,d,e)=>{b+=`<rect x="${x}.5" y="${y}.5" width="128" height="9" rx="1.500" fill="${c}" stroke="${d}" stroke-width="1.500"/>`+ln(`M${x+3.5} ${y+1}v8M${x+125.5} ${y+1}v8`,1,d)+`<rect x="${x+71}" y="${y+2}" width="53" height="6" fill="${e}"/><text x="${x+5}" y="${y+7}">Digit Scroller +</text><text x="${x+125}" y="${y+7}" text-anchor="end">${v}</text>`};
scroll(664,397,'10.000','#7eea2f','#1d5c06','#a3f169');scroll(663,458,'10020.000','#7eea2f','#1d5c06','#a3f169');scroll(664,507,'100.000','#7eea2f','#1d5c06','#a3f169');scroll(665,553,'100.000','#7eea2f','#1d5c06','#a3f169');
scroll(671,648,'400.000','#ccc','#333','#e4e4e4');scroll(674,680,'15.000','#ccc','#333','#e4e4e4');
const glyph={l:'M3 0h-6m2-2l-2 2 2 2',r:'M-3 0h6m-2-2l2 2-2 2',u:'M0 3v-6m-2 2l2-2 2 2',d:'M0-3v6m-2-2l2 2 2-2',p:'M-3 0h6M0-3v6',h:'M-3-3h6M-3-1h6M-3 1h6M-3 3h6',v:'M-3-3v6M-1-3v6M1-3v6M3-3v6'};
[[727,372,'h'],[715,384,'l'],[727,384,'p'],[739,384,'r'],[715,574,'l'],[727,574,'p'],[739,574,'r'],[727,586,'h'],[650,467,'u'],[650,479,'p'],[650,491,'d'],[638,479,'v'],[804,467,'u'],[804,479,'p'],[804,491,'d'],[816,479,'v']].forEach(([x,y,k])=>b+=`<g transform="translate(${x}.5 ${y}.5)"><rect x="-5" y="-5" width="10" height="10" rx="1" fill="#444" stroke="#000" stroke-width="1.500"/><path d="${glyph[k]}" fill="none" stroke="#fff"/></g>`);
b+='<circle cx="736" cy="480" r="7.700" fill="#e8ecf0" stroke="#3f9ae4" stroke-width="4.500"/><path d="M728.500 483a8 8 0 0 1 1-7" fill="none" stroke="#3fd5f5" stroke-width="4.500"/>';
board.innerHTML=b;

// QR card: finder marks, timing rows, alignment mark and data modules
let seed=7,o='';const rnd=()=>(seed=(seed*16807)%2147483647)/2147483647;
const ring=(r,c,x,y,n)=>{const d=Math.max(Math.abs(r-y),Math.abs(c-x));return n==3?d!=2:d!=1};
for(let r=0;r<37;r++)for(let c=0;c<37;c++){let on=rnd()<.52;
 if(r<8&&c<8)on=r<7&&c<7&&ring(r,c,3,3,3);else if(r<8&&c>28)on=r<7&&c>29&&ring(r,c,33,3,3);else if(r>28&&c<8)on=r>29&&c<7&&ring(r,c,3,33,3);
 else if(Math.abs(r-30)<3&&Math.abs(c-30)<3)on=ring(r,c,30,30,2);else if(r==6)on=c%2==0;else if(c==6)on=r%2==0;
 if(on)o+=`M${c} ${r}h1v1h-1z`}
qr.innerHTML=`<path d="${o}"/><g shape-rendering="auto"><rect x="14" y="14" width="9.200" height="9.200" rx="1" fill="#fff" stroke="#ccc" stroke-width=".2"/><path fill="#8f8277" d="M14.300 15.500h8.600v6h-8.600z"/><g fill="#f5f3f0"><circle cx="16.500" cy="17.500" r="1.500"/><circle cx="20" cy="18" r="1.800"/><circle cx="15.600" cy="20.200" r="1.200"/><circle cx="21.700" cy="20" r="1.100"/><path d="M17 20h4l-1 1.500h-3z"/></g><g fill="#161210"><circle cx="15.900" cy="17.500" r=".4"/><circle cx="17.100" cy="17.300" r=".4"/><circle cx="19.500" cy="17.700" r=".45"/><circle cx="20.900" cy="17.500" r=".45"/><circle cx="15" cy="16" r=".6"/><circle cx="18.300" cy="16.300" r=".6"/><circle cx="21.700" cy="16.400" r=".6"/><circle cx="15.200" cy="20.200" r=".3"/><circle cx="16" cy="20.200" r=".3"/><path d="M17 19.500q2-1 3 1l-2 .6z"/></g></g>`;
</script>
<script src="https://cdn.jsdelivr.net/npm/bootstrap@5.3.0/dist/js/bootstrap.bundle.min.js"></script>
</body>
</html>
